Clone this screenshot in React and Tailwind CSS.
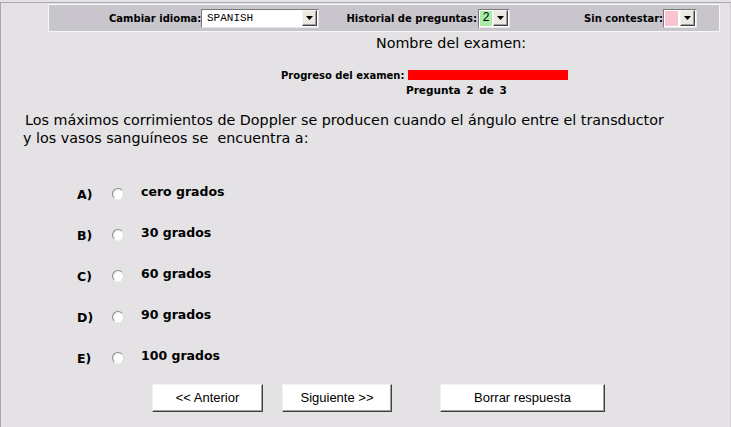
import React from "react";

const V = { fontFamily: '"DejaVu Sans", Verdana, sans-serif' };

function Arrow() {
  return (
    <span className="flex h-[16px] w-[15px] items-center justify-center border border-t-[#f4f4f4] border-l-[#f4f4f4] border-r-[#404040] border-b-[#404040] bg-[#ece9e2] shadow-[inset_-1px_-1px_0_#a0a0a0]">
      <svg width="7" height="4" viewBox="0 0 7 4">
        <path d="M0 0H7L3.5 4Z" fill="#000" />
      </svg>
    </span>
  );
}

function Select({ w, children }) {
  return (
    <span
      className={`flex h-[19px] items-center justify-between border border-t-[#7a7a7a] border-l-[#7a7a7a] border-r-[#e8e8e8] border-b-[#e8e8e8] bg-white p-[1px] ${w}`}
    >
      {children}
      <Arrow />
    </span>
  );
}

function Radio() {
  return (
    <span className="block h-[12px] w-[12px] rounded-full border border-t-[#8c8c8c] border-l-[#8c8c8c] border-r-[#dcdcdc] border-b-[#f4f4f4] bg-[radial-gradient(circle_at_60%_60%,#ffffff_45%,#dedede)]" />
  );
}

const options = [
  ["A)", "cero grados"],
  ["B)", "30 grados"],
  ["C)", "60 grados"],
  ["D)", "90 grados"],
  ["E)", "100 grados"],
];

function Btn({ w, children }) {
  return (
    <button
      className={`flex h-[28px] items-center justify-center border border-t-[#f2f2f2] border-l-[#f2f2f2] border-r-[#404040] border-b-[#404040] bg-white text-[13px] text-black shadow-[inset_-1px_-1px_0_#a0a0a0] ${w}`}
      style={{ fontFamily: '"Liberation Sans", Arial, sans-serif' }}
    >
      {children}
    </button>
  );
}

export default function App() {
  return (
    <div className="h-[427px] w-[731px] overflow-hidden bg-[#e4e2e5] pt-[2px] text-black">
      <div className="h-full border-l border-t border-[#a9a7ab] border-r border-r-[#d2d0d4]">
        {/* toolbar */}
        <div
          className="ml-[47px] mt-[1px] flex h-[28px] w-[672px] items-center border border-[#f6f5f7] bg-[#c8c6cc] pl-[60px] text-[10px] font-bold"
          style={V}
        >
          <span className="w-[92px] whitespace-nowrap text-right pr-[1px]">Cambiar idioma:</span>
          <Select w="w-[118px]">
            <span
              className="pl-[4px] text-[11px] font-normal"
              style={{ fontFamily: '"Liberation Mono", "Courier New", monospace' }}
            >
              SPANISH
            </span>
          </Select>
          <span className="ml-[27px] w-[132px] whitespace-nowrap text-right pr-[1px]">Historial de preguntas:</span>
          <Select w="w-[32px]">
            <span
              className="flex h-full w-[12px] items-center justify-center bg-[#a8eca8] text-[12px] font-normal"
              style={{ fontFamily: '"Liberation Mono", "Courier New", monospace' }}
            >
              2
            </span>
          </Select>
          <span className="ml-[74px] w-[79px] whitespace-nowrap text-right pr-[1px]">Sin contestar:</span>
          <Select w="w-[34px]">
            <span className="h-full w-[13px] bg-[#f8c4d0]" />
          </Select>
        </div>

        {/* exam name */}
        <div className="ml-[375px] mt-[3px] h-[17px] text-[14.3px] leading-[17px]" style={V}>
          Nombre del examen:
        </div>

        {/* progress */}
        <div className="ml-[280px] mt-[17px] flex h-[12px] items-center text-[10px] font-bold" style={V}>
          <span className="w-[127px] whitespace-nowrap">Progreso del examen:</span>
          <span className="h-[10px] w-[160px] bg-[#ff0000]" />
        </div>
        <div
          className="ml-[405px] mt-[2px] h-[14px] whitespace-nowrap text-[10.5px] font-bold leading-[14px] [word-spacing:2px]"
          style={V}
        >
          Pregunta 2 de 3
        </div>

        {/* question */}
        <div className="ml-[22px] mt-[14px] text-[14.3px] leading-[18px]" style={V}>
          <div className="pl-[2px] whitespace-nowrap">
            Los máximos corrimientos de Doppler se producen cuando el ángulo entre el transductor
          </div>
          <div className="whitespace-nowrap">y los vasos sanguíneos se&nbsp; encuentra a:</div>
        </div>

        {/* options */}
        <div className="mt-[36px] flex flex-col text-[12.5px] font-bold" style={V}>
          {options.map(([l, t]) => (
            <div key={l} className="flex h-[41px] items-start">
              <span className="ml-[76px] mt-[3px] w-[34px]">{l}</span>
              <span className="ml-[1px] mt-[5px]">
                <Radio />
              </span>
              <span className="ml-[17px]">{t}</span>
            </div>
          ))}
        </div>

        {/* buttons */}
        <div className="ml-[151px] mt-[-4px] flex">
          <Btn w="w-[111px]">&lt;&lt; Anterior</Btn>
          <Btn w="w-[110px] ml-[19px]">Siguiente &gt;&gt;</Btn>
          <Btn w="w-[165px] ml-[48px]">Borrar respuesta</Btn>
        </div>
      </div>
    </div>
  );
}
